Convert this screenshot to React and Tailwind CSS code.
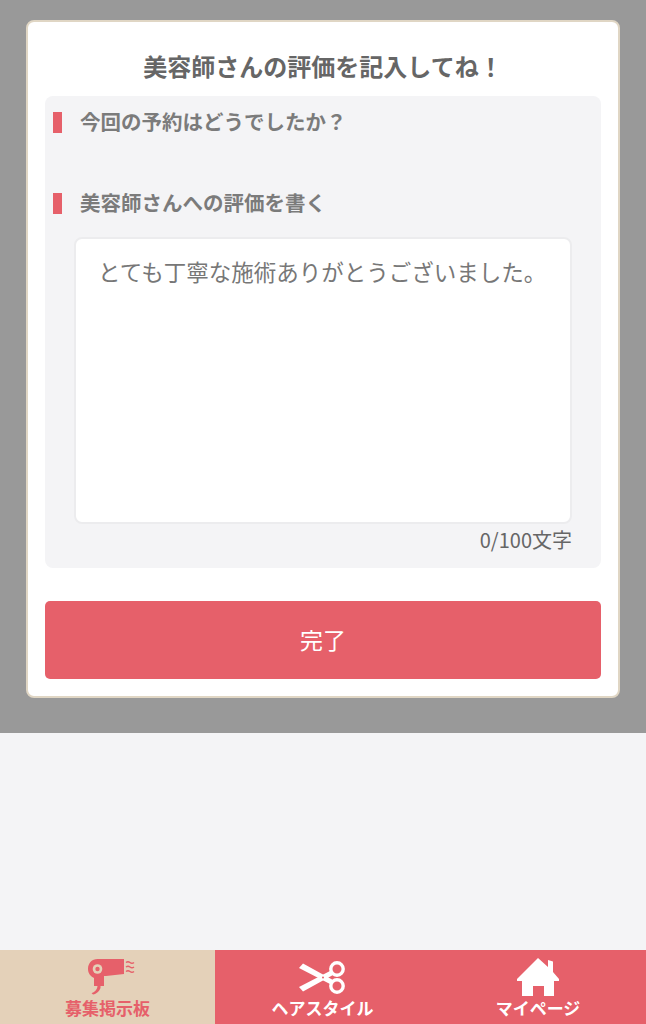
const font = "font-['Noto_Sans_CJK_JP','Noto_Sans',sans-serif]";

const HairDryer = () => (
  <svg className="ml-[8px]" width="47" height="36" viewBox="0 0 47 36" fill="#e6606a">
    <path d="M9.5 0 L36 0 L36 15 L18 17 L16 17 L16 27 L12.5 27 L12.5 29 C11.5 32 8.5 35 5 35.5 L3.5 34 C6.5 33.5 9 31 9.5 27 L6 27 L6 19 C2.5 17.5 0 14 0 10 C0 4 4 0 9.5 0 Z" />
    <circle cx="9.5" cy="10" r="4.8" fill="#e4d1b9" />
    <circle cx="9.5" cy="10" r="2.2" fill="#e6606a" />
    <path d="M38 3.5 q2 -1.4 4 0 t4 0 M38 8 q2 -1.4 4 0 t4 0 M38 12.5 q2 -1.4 4 0 t4 0" fill="none" stroke="#e6606a" strokeWidth="1.5" />
  </svg>
);

const Scissors = () => (
  <svg width="47" height="33" viewBox="0 0 47 33" fill="#fff">
    <circle cx="38" cy="8" r="6.2" fill="none" stroke="#fff" strokeWidth="3.4" />
    <circle cx="38" cy="25" r="6.2" fill="none" stroke="#fff" strokeWidth="3.4" />
    <path d="M0 7 L4 2.5 L34 19 L31 23 Z" />
    <path d="M0 26 L4 30.5 L34 14 L31 10 Z" />
    <circle cx="24" cy="16.5" r="1" fill="#e6606a" />
  </svg>
);

const House = () => (
  <svg width="42" height="38" viewBox="0 0 42 38" fill="#fff">
    <path d="M21 0 L31 9 L31 2 L36 3.5 L36 14 L42 21 L42 23 L37 23 L37 38 L27 38 L27 28 L16 28 L16 38 L5 38 L5 23 L0 23 L0 21 Z" />
  </svg>
);

const SectionLabel = ({ children }) => (
  <div className="flex items-center h-[22px]">
    <span className="w-[9px] h-[21px] bg-[#e6606a]" />
    <span className="ml-[18px] pb-[2px] text-[20.5px] font-bold text-[#7b7b7b] leading-[22px]">{children}</span>
  </div>
);

const TabItem = ({ icon, label, active }) => (
  <div className={`flex-1 flex flex-col items-center pt-[8px] ${active ? 'bg-[#e4d1b9] text-[#e6606a]' : 'text-white'}`}>
    <div className="h-[38px] flex items-center justify-center">{icon}</div>
    <span className="text-[17px] font-bold leading-[24px]">{label}</span>
  </div>
);

export default function App() {
  return (
    <div className={`w-[646px] h-[1024px] flex flex-col bg-[#f4f4f6] ${font}`}>
      <div className="h-[733px] bg-[#999999] px-[26px] pt-[20px]">
        <div className="h-[678px] bg-white rounded-[8px] border-2 border-[#e0d6c4] px-[17px] pt-[28px]">
          <h1 className="text-center text-[24px] font-bold text-[#666666] leading-[32px]">美容師さんの評価を記入してね！</h1>
          <div className="mt-[14px] h-[472px] bg-[#f4f4f6] rounded-[8px] pl-[8px] pr-[29px] pt-[15px]">
            <SectionLabel>今回の予約はどうでしたか？</SectionLabel>
            <div className="mt-[59px]">
              <SectionLabel>美容師さんへの評価を書く</SectionLabel>
            </div>
            <div className="ml-[21px] mt-[23px] h-[287px] bg-white rounded-[8px] border-2 border-[#ececee] pl-[22px] pt-[16px] text-[22.5px] leading-[32px] text-[#777777]">
              とても丁寧な施術ありがとうございました。
            </div>
            <p className="mt-[2px] text-right text-[20px] leading-[28px] text-[#666666]">0/100文字</p>
          </div>
          <button className="mt-[33px] w-full h-[78px] bg-[#e6606a] rounded-[5px] text-white text-[23px] pb-[2px]">完了</button>
        </div>
      </div>
      <div className="flex-1" />
      <div className="h-[74px] flex bg-[#e6606a]">
        <div className="w-[215px] flex">
          <TabItem active icon={<HairDryer />} label="募集掲示板" />
        </div>
        <div className="w-[215px] flex">
          <TabItem icon={<Scissors />} label="ヘアスタイル" />
        </div>
        <div className="w-[216px] flex">
          <TabItem icon={<House />} label="マイページ" />
        </div>
      </div>
    </div>
  );
}
